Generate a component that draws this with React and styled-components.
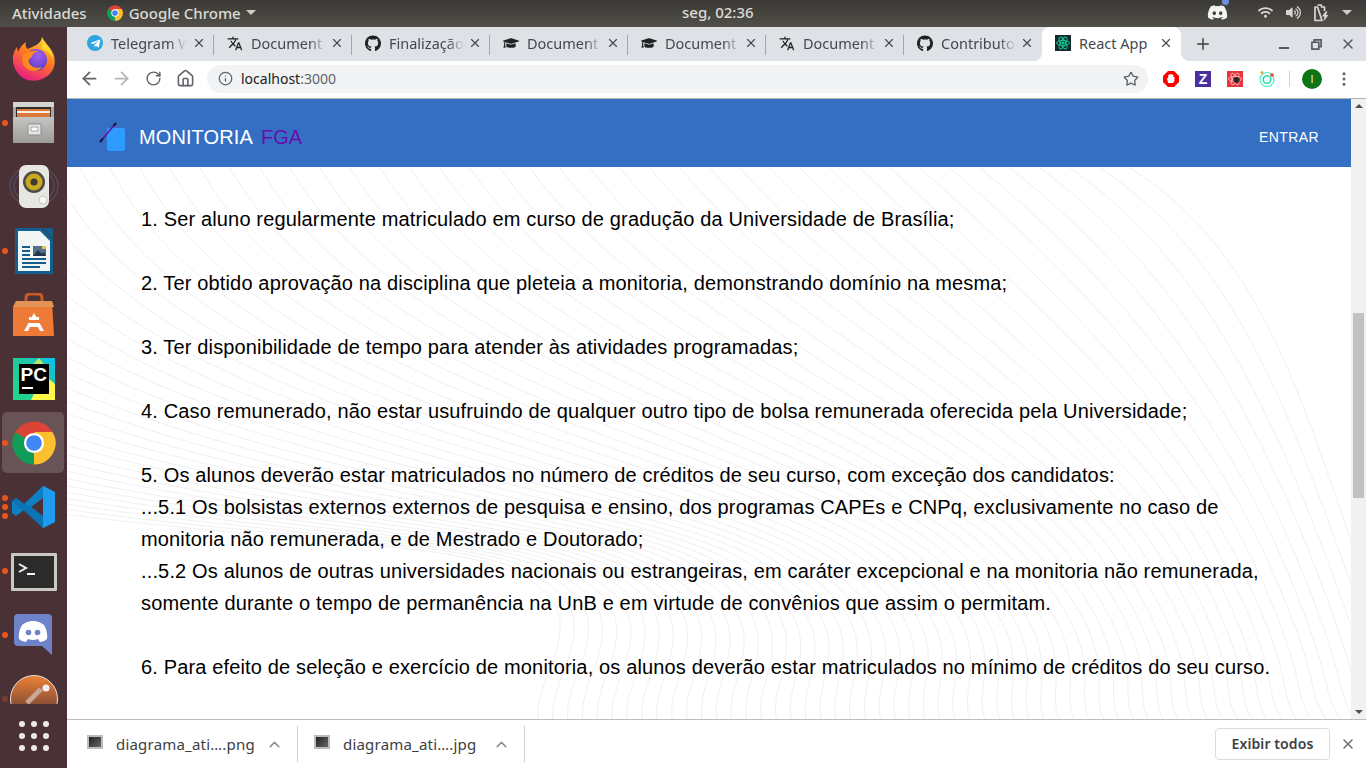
import React from 'react';
import styled, { createGlobalStyle } from 'styled-components';
import { ArrowLeft, ArrowRight, RotateCw, Home, Info, Star, Plus, X, ChevronUp, EllipsisVertical } from 'lucide-react';
import { FaDiscord, FaGithub, FaGraduationCap, FaTelegramPlane, FaVolumeUp, FaWifi } from 'react-icons/fa';
import { MdTranslate } from 'react-icons/md';

const GlobalStyle = createGlobalStyle`
  html, body, #root { margin: 0; height: 100%; }
  body { overflow: hidden; background: #fff; font-family: "Noto Sans", sans-serif; }
  * { box-sizing: border-box; }
`;

const Desktop = styled.div`
  width: 1366px;
  height: 768px;
  display: flex;
  flex-direction: column;
  overflow: hidden;
`;

const TopBar = styled.div`
  height: 27px;
  flex: none;
  display: flex;
  align-items: center;
  justify-content: space-between;
  padding: 0 14px 2px 12px;
  background: linear-gradient(#3a3935, #514f49);
  color: #dcdad5;
  font-size: 15px;
  font-weight: 500;
  position: relative;
`;

const BarGroup = styled.div`
  display: flex;
  align-items: center;
  gap: ${p => p.$gap || 0}px;
  margin-left: ${p => p.$left || 0}px;
`;

const AppName = styled.span`
  margin-left: 6px;
`;

const Caret = styled.span`
  display: inline-block;
  border-left: 5px solid transparent;
  border-right: 5px solid transparent;
  border-top: 5px solid #cfcdc8;
  margin-left: ${p => p.$left || 0}px;
`;

const Clock = styled.div`
  position: absolute;
  left: 682px;
  top: 2px;
`;

const DiscordTray = styled.span`
  position: relative;
  display: flex;
  margin-right: 30px;
  &::after {
    content: '';
    position: absolute;
    top: -4px;
    right: -1px;
    width: 7px;
    height: 7px;
    border-radius: 50%;
    background: #6f8fd8;
  }
`;

const Workspace = styled.div`
  flex: 1;
  min-height: 0;
  display: flex;
`;

const Dock = styled.div`
  width: 67px;
  flex: none;
  display: flex;
  flex-direction: column;
  background: #4a3136;
`;

const DockList = styled.div`
  height: 677px;
  overflow: hidden;
  flex: none;
`;

const DockSlot = styled.div`
  position: relative;
  height: 64px;
  display: flex;
  align-items: center;
  justify-content: center;
  &::before {
    content: '';
    position: absolute;
    inset: 1px 3px 2px 2px;
    border-radius: 5px;
    background: ${p => (p.$active ? 'rgba(255,255,255,0.17)' : 'transparent')};
  }
  & > svg { position: relative; }
`;

const DotColumn = styled.div`
  position: absolute;
  left: 2px;
  top: 0;
  bottom: 0;
  display: flex;
  flex-direction: column;
  justify-content: center;
  gap: 3px;
  z-index: 1;
`;

const Dot = styled.span`
  width: 6px;
  height: 6px;
  border-radius: 50%;
  background: ${p => (p.$dim ? '#7a3a2c' : '#e9541f')};
`;

const AppGrid = styled.div`
  height: 64px;
  padding: 16px 17px;
  display: grid;
  grid-template-columns: repeat(3, 6px);
  grid-auto-rows: 6px;
  gap: 6px;
  justify-content: center;
  align-content: center;
  & > span { border-radius: 50%; background: #ece9e9; }
`;

const Browser = styled.div`
  flex: 1;
  min-width: 0;
  display: flex;
  flex-direction: column;
`;

const TabStrip = styled.div`
  height: 34px;
  flex: none;
  display: flex;
  align-items: flex-end;
  padding-left: 9px;
  background: #dee1e6;
  position: relative;
`;

const Tab = styled.div`
  width: 138px;
  height: 34px;
  display: flex;
  align-items: center;
  padding: 0 0 2px ${p => (p.$first ? 11 : 13)}px;
  color: #45484d;
  font-size: 14.5px;
  position: relative;
  &::after {
    content: '';
    position: absolute;
    right: 0;
    top: 8px;
    height: 20px;
    width: 1px;
    background: ${p => (p.$noSep ? 'transparent' : '#a4a7ab')};
  }
`;

const ActiveTab = styled(Tab)`
  width: 139px;
  background: #fff;
  border-radius: 8px 8px 0 0;
  &::before, &::after {
    content: '';
    position: absolute;
    top: auto;
    bottom: 0;
    width: 8px;
    height: 8px;
  }
  &::before {
    left: -8px;
    background: radial-gradient(circle at 0 0, transparent 7.5px, #fff 8px);
  }
  &::after {
    right: -8px;
    background: radial-gradient(circle at 100% 0, transparent 7.5px, #fff 8px);
  }
`;

const Favicon = styled.span`
  width: 16px;
  height: 16px;
  flex: none;
  display: flex;
  align-items: center;
  justify-content: center;
  color: #202124;
`;

const TelegramBadge = styled(Favicon)`
  border-radius: 50%;
  background: #2ca5e0;
  color: #fff;
`;

const TabTitle = styled.span`
  width: 75px;
  margin-left: 8px;
  white-space: nowrap;
  mask-image: linear-gradient(to right, #000 78%, transparent 100%);
`;

const ActiveTitle = styled.span`
  margin-left: 8px;
  white-space: nowrap;
`;

const TabClose = styled.span`
  position: absolute;
  right: 8px;
  top: 9px;
  display: flex;
  color: #45484d;
`;

const NewTab = styled.span`
  width: 44px;
  height: 34px;
  display: flex;
  align-items: center;
  justify-content: center;
  color: #3c4043;
`;

const WindowButtons = styled.div`
  margin-left: auto;
  height: 34px;
  padding-right: 2px;
  display: flex;
  align-items: center;
  color: #55585c;
`;

const WindowButton = styled.span`
  width: 32px;
  height: 34px;
  display: flex;
  align-items: center;
  justify-content: center;
`;

const MinimizeGlyph = styled.span`
  width: 10px;
  height: 2px;
  background: #55585c;
  margin-top: 8px;
`;

const Toolbar = styled.div`
  height: 38px;
  flex: none;
  display: flex;
  align-items: center;
  background: #fff;
  border-bottom: 1px solid #b3b3b3;
  padding-bottom: 2px;
  padding-left: 6px;
`;

const NavButton = styled.span`
  width: 32px;
  height: 28px;
  flex: none;
  display: flex;
  align-items: center;
  justify-content: center;
  color: ${p => (p.$off ? '#b4b7ba' : '#5f6368')};
`;

const Omnibox = styled.div`
  width: 941px;
  height: 28px;
  margin-left: 6px;
  flex: none;
  display: flex;
  align-items: center;
  padding: 0 9px 0 11px;
  border-radius: 14px;
  background: #f1f3f4;
  color: #5f6368;
  font-size: 14px;
`;

const Address = styled.span`
  margin-left: 8px;
  flex: 1;
  color: #5f6368;
  & > b { color: #202124; font-weight: 400; }
`;

const Extensions = styled.div`
  display: flex;
  align-items: center;
  gap: 16px;
  margin-left: 15px;
`;

const ToolDivider = styled.span`
  width: 1px;
  height: 16px;
  background: #d0d2d5;
  margin-left: -2px;
`;

const Avatar = styled.span`
  width: 20px;
  height: 20px;
  margin-left: -4px;
  border-radius: 50%;
  background: #0f7417;
  color: #dfeedd;
  font-family: "Liberation Sans", sans-serif;
  font-size: 11px;
  display: flex;
  align-items: center;
  justify-content: center;
`;

const MenuDots = styled.span`
  display: flex;
  margin-left: -3px;
  color: #5f6368;
`;

const Viewport = styled.div`
  flex: 1;
  min-height: 0;
  display: flex;
`;

const Page = styled.main`
  flex: 1;
  min-width: 0;
  position: relative;
  overflow: hidden;
  font-family: "Liberation Sans", Arial, sans-serif;
  background: #fff;
`;

const Waves = styled.svg`
  position: absolute;
  inset: 0;
`;

const AppHeader = styled.header`
  height: 68px;
  display: flex;
  align-items: center;
  justify-content: space-between;
  padding: 8px 32px 0;
  background: #356fc4;
  position: relative;
  color: #fff;
`;

const Brand = styled.div`
  display: flex;
  align-items: center;
  font-size: 20px;
  letter-spacing: 0.1px;
`;

const BrandAccent = styled.span`
  color: #6a0dad;
  margin-left: 8px;
`;

const LoginButton = styled.span`
  font-size: 14px;
  letter-spacing: 0.4px;
`;

const Rules = styled.section`
  position: relative;
  padding: 36px 74px 0;
  color: #000;
  font-size: 20px;
  letter-spacing: 0.15px;
  line-height: 32px;
`;

const Rule = styled.p`
  margin: 0 0 32px;
`;

const Scrollbar = styled.div`
  width: 15px;
  flex: none;
  display: flex;
  flex-direction: column;
  align-items: center;
  padding: 0 2px;
  background: #f1f1f1;
  position: relative;
`;

const ScrollArrow = styled.span`
  position: absolute;
  ${p => (p.$down ? 'bottom: 5px;' : 'top: 5px;')}
  border-left: 4px solid transparent;
  border-right: 4px solid transparent;
  ${p => (p.$down ? 'border-top: 4px solid #505050;' : 'border-bottom: 4px solid #505050;')}
`;

const ScrollThumb = styled.span`
  width: 11px;
  height: 185px;
  margin-top: 214px;
  background: #c1c1c1;
`;

const DownloadBar = styled.footer`
  height: 49px;
  flex: none;
  display: flex;
  align-items: center;
  background: #fff;
  border-top: 1px solid #bdbdbd;
`;

const DownloadItem = styled.div`
  width: ${p => p.$width}px;
  height: 36px;
  display: flex;
  align-items: center;
  padding-left: ${p => p.$pad}px;
  border-right: 1px solid #cfcfcf;
  color: #3c4043;
  font-size: 15px;
  letter-spacing: 0.2px;
  position: relative;
`;

const FileThumb = styled.span`
  width: 16px;
  height: 14px;
  flex: none;
  margin-top: -4px;
  border: 2px solid #bcbcbc;
  background: linear-gradient(135deg, #222, #666);
`;

const FileName = styled.span`
  margin-left: 13px;
  width: 150px;
`;

const FileChevron = styled.span`
  display: flex;
  color: #8a8c8f;
`;

const ShowAll = styled.span`
  margin-left: auto;
  width: 115px;
  height: 32px;
  margin-top: -1px;
  display: flex;
  align-items: center;
  justify-content: center;
  border: 1px solid #dadce0;
  border-radius: 4px;
  color: #3c4043;
  font-size: 14px;
  font-weight: 600;
  letter-spacing: 0.1px;
`;

const BarClose = styled.span`
  width: 36px;
  display: flex;
  justify-content: center;
  color: #6b6e72;
`;

// Faint concentric lines behind the page text
const wavePaths = Array.from({ length: 60 }, (_, i) => {
  const x0 = 1063 - 30 * i;
  const midX = 1290 - 15 * i;
  return `M${x0} 69 C${x0 + 130} ${150 + 5 * i} ${1235 - 17 * i} ${300 + 2 * i} ${midX} 460 S${midX + 30} 590 ${midX + 75} 640`;
});

const FirefoxIcon = () => (
  <svg width="46" height="46" viewBox="0 0 46 46">
    <defs>
      <linearGradient id="ffBase" x1="0.8" y1="0" x2="0.3" y2="1">
        <stop offset="0" stopColor="#ffdd3c" />
        <stop offset="0.45" stopColor="#ff7a1f" />
        <stop offset="1" stopColor="#e8188a" />
      </linearGradient>
      <radialGradient id="ffGlobe" cx="0.6" cy="0.3" r="0.8">
        <stop offset="0" stopColor="#a45cf0" />
        <stop offset="1" stopColor="#4a3bbd" />
      </radialGradient>
    </defs>
    <path d="M31 1 C33 7 39 10 42 17 C46 26 43 36 35 41 C26 47 12 46 6 36 C0 27 1 17 6 11 L7 16 C9 11 12 8 15 6 C14 10 15 12 17 13 C22 10 30 9 31 1Z" fill="url(#ffBase)" />
    <circle cx="25" cy="24" r="11" fill="url(#ffGlobe)" />
    <path d="M12 19 C16 15 23 14 28 15 C24 16 21 18 21 21 C18 22 17 24 18 27 C20 31 26 33 31 31 C26 38 15 35 12 28 C11 25 11 22 12 19Z" fill="#ff8a1e" />
    <path d="M31 1 C34 8 41 12 42 22 C39 17 35 14 30 13 C32 9 32 5 31 1Z" fill="#ffd52e" />
  </svg>
);

const CabinetIcon = () => (
  <svg width="42" height="44" viewBox="0 0 42 44">
    <defs>
      <linearGradient id="cabFront" x1="0" y1="0" x2="0" y2="1">
        <stop offset="0" stopColor="#c4c4c2" />
        <stop offset="1" stopColor="#9c9c9a" />
      </linearGradient>
    </defs>
    <rect x="0" y="1" width="41" height="41" rx="2" fill="#a9a9a7" />
    <rect x="0" y="1" width="41" height="5" fill="#d4d4d2" />
    <rect x="3" y="6" width="35" height="10" fill="#2d2d2d" />
    <rect x="4" y="8" width="33" height="8" fill="#d9793a" />
    <rect x="4" y="10" width="33" height="2" fill="#f6eee5" />
    <rect x="0" y="16" width="41" height="26" fill="url(#cabFront)" />
    <rect x="15" y="23" width="13" height="11" rx="1" fill="#e6e6e4" stroke="#8a8a88" />
    <rect x="18" y="26" width="7" height="4" fill="#fafafa" stroke="#777" strokeWidth="0.6" />
  </svg>
);

const SpeakerIcon = () => (
  <svg width="50" height="46" viewBox="0 0 50 46">
    <ellipse cx="25" cy="22" rx="24" ry="20" fill="none" stroke="#5d5f77" strokeWidth="1.5" opacity="0.5" />
    <ellipse cx="25" cy="22" rx="20" ry="17" fill="none" stroke="#5d5f77" strokeWidth="1.5" opacity="0.5" />
    <rect x="10" y="1" width="30" height="43" rx="7" fill="#e6e6e2" />
    <circle cx="25" cy="18" r="11" fill="#4c4c46" />
    <circle cx="25" cy="18" r="8.5" fill="#c8a91f" />
    <circle cx="25" cy="18" r="3.5" fill="#3a3a30" />
    <circle cx="34" cy="36" r="4" fill="#f6f6f4" stroke="#c4c4c0" />
  </svg>
);

const WriterIcon = () => (
  <svg width="40" height="46" viewBox="0 0 40 46">
    <path d="M1 0 H28 L39 11 V46 H1Z" fill="#125f8d" />
    <path d="M4 3 H26 L36 13 V43 H4Z" fill="#f4f5f5" />
    <path d="M29 0 H39 V10Z" fill="#125f8d" />
    <path d="M8 19 H16 M8 23 H16 M8 27 H16 M8 31 H32 M8 35 H32 M8 39 H26" stroke="#125f8d" strokeWidth="2" />
    <rect x="19" y="18" width="13" height="10" fill="#54708a" />
    <path d="M19 28 L24 22 L28 26 L30 24 L32 28Z" fill="#22364a" />
    <rect x="28" y="18" width="4" height="3" fill="#e5c64a" />
  </svg>
);

const StoreIcon = () => (
  <svg width="42" height="44" viewBox="0 0 42 44">
    <path d="M13 10 V5 Q13 1 17 1 H25 Q29 1 29 5 V10" fill="none" stroke="#c95a25" strokeWidth="3" />
    <path d="M3 8 H39 L41 43 H0 L0 15Z" fill="#ee7a38" />
    <path d="M3 8 H39 L41 14 H0Z" fill="#e39355" />
    <path d="M21 20 L31 38 H27 L25 34 H17 L15 38 H11Z" fill="#fff" />
    <rect x="13" y="27" width="16" height="3" fill="#ee7a38" />
    <rect x="16" y="24" width="10" height="3" fill="#fff" />
  </svg>
);

const PyCharmIcon = () => (
  <svg width="42" height="42" viewBox="0 0 42 42">
    <defs>
      <linearGradient id="pcBg" x1="0" y1="1" x2="1" y2="0">
        <stop offset="0" stopColor="#21d789" />
        <stop offset="0.6" stopColor="#21c7a5" />
        <stop offset="1" stopColor="#07c3f2" />
      </linearGradient>
    </defs>
    <rect width="42" height="42" fill="url(#pcBg)" />
    <path d="M42 42 H18 L30 16 L42 26Z" fill="#fcf84a" />
    <path d="M26 0 L34 10 L30 16 L20 6Z" fill="#b7e66b" />
    <rect x="6" y="6" width="30" height="30" fill="#000" />
    <text x="7.5" y="23" fontFamily="Liberation Sans, sans-serif" fontWeight="700" fontSize="19" fill="#fff">PC</text>
    <rect x="9" y="29" width="11" height="2" fill="#fff" />
  </svg>
);

const ChromeIcon = ({ size = 44 }) => (
  <svg width={size} height={size} viewBox="0 0 48 48">
    <circle cx="24" cy="24" r="23.5" fill="#db4437" />
    <path d="M24 24 L44.4 12.2 A23.5 23.5 0 0 1 24 47.5Z" fill="#fbc02d" />
    <path d="M24 24 L24 47.5 A23.5 23.5 0 0 1 3.6 12.2Z" fill="#0f9d58" />
    <path d="M24 12 H44.4 L35 24Z" fill="#fbc02d" />
    <path d="M24 36 L35 24 L24 47.5Z" fill="#fbc02d" />
    <path d="M13.6 30 L24 36 L14 44 L3.6 24Z" fill="#0f9d58" />
    <circle cx="24" cy="24" r="11" fill="#fff" />
    <circle cx="24" cy="24" r="8.5" fill="#4285f4" />
  </svg>
);

const VSCodeIcon = () => (
  <svg width="44" height="44" viewBox="0 0 44 44">
    <path d="M31 1 L43 7 V37 L31 43 L12 25 L4 31 L0 28 V16 L4 13 L12 19Z M31 13 L19 22 L31 31Z" fill="#0f7fc5" fillRule="evenodd" />
    <path d="M31 1 L43 7 V37 L31 43Z" fill="#1f9cf0" />
    <path d="M0 16 L4 13 L31 31 V43Z" fill="#0a6aa8" opacity="0.6" />
  </svg>
);

const TerminalIcon = () => (
  <svg width="46" height="38" viewBox="0 0 46 38" style={{ marginTop: 2 }}>
    <rect width="46" height="38" rx="1" fill="#c9c9c6" />
    <rect x="3" y="3" width="40" height="32" fill="#2b2b2b" />
    <path d="M8 11 L15 15 L8 19" fill="none" stroke="#f2f2f2" strokeWidth="2" />
    <rect x="16" y="20" width="8" height="2" fill="#f2f2f2" />
  </svg>
);

const DiscordDockIcon = () => (
  <svg width="40" height="42" viewBox="0 0 40 42">
    <path d="M4 0 H34 Q38 0 38 4 V41 L28 32 H4 Q0 32 0 28 V4 Q0 0 4 0Z" fill="#6f83c8" />
    <path d="M8 11 Q13 7 19 7 Q25 7 30 11 Q34 18 33 25 Q30 28 26 28 L24 25 Q19 27 14 25 L12 28 Q8 28 5 25 Q4 18 8 11Z" fill="#fff" />
    <circle cx="14.5" cy="18.5" r="2.8" fill="#6f83c8" />
    <circle cx="23.5" cy="18.5" r="2.8" fill="#6f83c8" />
  </svg>
);

const PostmanIcon = () => (
  <svg width="48" height="48" viewBox="0 0 48 48">
    <defs>
      <linearGradient id="pmFade" x1="0" y1="0" x2="0" y2="1">
        <stop offset="0" stopColor="#ee8135" />
        <stop offset="0.6" stopColor="#8f5236" />
      </linearGradient>
    </defs>
    <circle cx="24" cy="24" r="23.5" fill="url(#pmFade)" stroke="#e6e0dc" strokeWidth="1" />
    <path d="M17 28 L31 14" stroke="#c9a593" strokeWidth="5" />
    <circle cx="36" cy="13" r="3.5" fill="#eee" />
  </svg>
);

const AppLogo = () => (
  <svg width="32" height="36" viewBox="0 0 32 36" style={{ marginRight: 8 }}>
    <rect x="8" y="9" width="18" height="23" rx="2" fill="#2e9bff" />
    <path d="M1 23 L17 4" stroke="#6a0dad" strokeWidth="1.6" />
    <path d="M1 23 L4 19.5 M14.5 7 L17 4" stroke="#111" strokeWidth="1.8" />
  </svg>
);

const ReactFavicon = () => (
  <svg width="16" height="16" viewBox="0 0 16 16">
    <rect width="16" height="16" fill="#14292b" />
    <g fill="none" stroke="#17c493" strokeWidth="1">
      <ellipse cx="8" cy="8" rx="6.5" ry="2.6" />
      <ellipse cx="8" cy="8" rx="6.5" ry="2.6" transform="rotate(60 8 8)" />
      <ellipse cx="8" cy="8" rx="6.5" ry="2.6" transform="rotate(120 8 8)" />
    </g>
    <circle cx="8" cy="8" r="1.6" fill="#17c493" />
  </svg>
);

const BatteryIcon = () => (
  <svg width="15" height="18" viewBox="0 0 15 18">
    <path d="M3.5 1 H7.5 V3 H10.5 V7 M8 16.5 H1 V3 H3.5Z" fill="none" stroke="#d8d6d1" strokeWidth="1.7" strokeLinejoin="round" />
    <path d="M11.5 7.5 L8 12.5 H10.5 L9.5 17.5 L14.5 11 H12 L13.5 7.5Z" fill="#d8d6d1" />
  </svg>
);

const RestoreIcon = () => (
  <svg width="11" height="11" viewBox="0 0 12 12">
    <path d="M3.5 3.5 V1 H11 V8.5 H8.5 M1 3.5 H8.5 V11 H1Z" fill="none" stroke="#55585c" strokeWidth="1.8" />
  </svg>
);

const AdBlockIcon = () => (
  <svg width="16" height="16" viewBox="0 0 16 16">
    <path d="M5 0 H11 L16 5 V11 L11 16 H5 L0 11 V5Z" fill="#f00" />
    <path d="M5 12 L4 7 L5.2 7 V4 H6.2 V3 H7.2 V3.6 H8.4 V3 H9.4 V4 H10.4 V6 L11.4 6 V10 L10 12Z" fill="#fff" />
  </svg>
);

const ZoteroIcon = () => (
  <svg width="16" height="16" viewBox="0 0 16 16">
    <rect width="16" height="16" fill="#4a2fa0" />
    <text x="8" y="13.2" textAnchor="middle" fontFamily="Liberation Sans, sans-serif" fontWeight="700" fontSize="14" fill="#fff">Z</text>
  </svg>
);

const ReactDevIcon = () => (
  <svg width="16" height="16" viewBox="0 0 16 16">
    <rect width="16" height="16" fill="#e8343c" />
    <g fill="none" stroke="#f6c9c9" strokeWidth="0.8">
      <ellipse cx="8" cy="8" rx="6.5" ry="2.6" />
      <ellipse cx="8" cy="8" rx="6.5" ry="2.6" transform="rotate(60 8 8)" />
      <ellipse cx="8" cy="8" rx="6.5" ry="2.6" transform="rotate(120 8 8)" />
    </g>
    <circle cx="9.5" cy="9" r="3" fill="#3a2020" />
  </svg>
);

const RingIcon = () => (
  <svg width="16" height="16" viewBox="0 0 16 16">
    <circle cx="8" cy="8.5" r="7" fill="none" stroke="#46f0c4" strokeWidth="1.2" />
    <circle cx="8" cy="8.5" r="3.8" fill="none" stroke="#2ed8a8" strokeWidth="1.6" />
    <circle cx="13" cy="4" r="1.8" fill="#f04030" />
    <circle cx="3" cy="1.6" r="1.4" fill="#f59a23" />
  </svg>
);

const TelegramFavicon = () => (
  <TelegramBadge><FaTelegramPlane size={11} /></TelegramBadge>
);

const TranslateFavicon = () => <Favicon><MdTranslate size={17} /></Favicon>;
const GithubFavicon = () => <Favicon><FaGithub size={17} /></Favicon>;
const CapFavicon = () => <Favicon><FaGraduationCap size={16} /></Favicon>;

const tabs = [
  { title: 'Telegram W', icon: <TelegramFavicon /> },
  { title: 'Document', icon: <TranslateFavicon /> },
  { title: 'Finalização', icon: <GithubFavicon /> },
  { title: 'Document', icon: <CapFavicon /> },
  { title: 'Document', icon: <CapFavicon /> },
  { title: 'Document', icon: <TranslateFavicon /> },
  { title: 'Contributo', icon: <GithubFavicon /> },
];

const dockApps = [
  { icon: <FirefoxIcon />, dots: 0 },
  { icon: <CabinetIcon />, dots: 1 },
  { icon: <SpeakerIcon />, dots: 0 },
  { icon: <WriterIcon />, dots: 1 },
  { icon: <StoreIcon />, dots: 0 },
  { icon: <PyCharmIcon />, dots: 0 },
  { icon: <ChromeIcon />, dots: 1, active: true },
  { icon: <VSCodeIcon />, dots: 3 },
  { icon: <TerminalIcon />, dots: 1 },
  { icon: <DiscordDockIcon />, dots: 1 },
  { icon: <PostmanIcon />, dots: 1, dim: true },
];

const rules = [
  ['1. Ser aluno regularmente matriculado em curso de gradução da Universidade de Brasília;'],
  ['2. Ter obtido aprovação na disciplina que pleteia a monitoria, demonstrando domínio na mesma;'],
  ['3. Ter disponibilidade de tempo para atender às atividades programadas;'],
  ['4. Caso remunerado, não estar usufruindo de qualquer outro tipo de bolsa remunerada oferecida pela Universidade;'],
  [
    '5. Os alunos deverão estar matriculados no número de créditos de seu curso, com exceção dos candidatos:',
    '...5.1 Os bolsistas externos externos de pesquisa e ensino, dos programas CAPEs e CNPq, exclusivamente no caso de monitoria não remunerada, e de Mestrado e Doutorado;',
    '...5.2 Os alunos de outras universidades nacionais ou estrangeiras, em caráter excepcional e na monitoria não remunerada, somente durante o tempo de permanência na UnB e em virtude de convênios que assim o permitam.',
  ],
  ['6. Para efeito de seleção e exercício de monitoria, os alunos deverão estar matriculados no mínimo de créditos do seu curso.'],
];

export default function App() {
  return (
    <Desktop>
      <GlobalStyle />
      <TopBar>
        <BarGroup>
          <span>Atividades</span>
          <BarGroup $left={20}>
            <ChromeIcon size={16} />
            <AppName>Google Chrome</AppName>
            <Caret $left={5} />
          </BarGroup>
        </BarGroup>
        <Clock>seg, 02:36</Clock>
        <BarGroup>
          <DiscordTray><FaDiscord size={21} color="#f4f4f2" /></DiscordTray>
          <BarGroup $gap={13}>
            <FaWifi size={15} color="#d8d6d1" />
            <FaVolumeUp size={15} color="#d8d6d1" />
            <BatteryIcon />
            <Caret />
          </BarGroup>
        </BarGroup>
      </TopBar>

      <Workspace>
        <Dock>
          <DockList>
            {dockApps.map((app, i) => (
              <DockSlot key={i} $active={app.active}>
                {app.dots > 0 && (
                  <DotColumn>
                    {Array.from({ length: app.dots }, (_, d) => <Dot key={d} $dim={app.dim} />)}
                  </DotColumn>
                )}
                {app.icon}
              </DockSlot>
            ))}
          </DockList>
          <AppGrid>
            {Array.from({ length: 9 }, (_, i) => <span key={i} />)}
          </AppGrid>
        </Dock>

        <Browser>
          <TabStrip>
            {tabs.map((tab, i) => (
              <Tab key={i} $first={i === 0} $noSep={i === tabs.length - 1}>
                {tab.icon}
                <TabTitle>{tab.title}</TabTitle>
                <TabClose><X size={14} strokeWidth={2} /></TabClose>
              </Tab>
            ))}
            <ActiveTab>
              <Favicon><ReactFavicon /></Favicon>
              <ActiveTitle>React App</ActiveTitle>
              <TabClose><X size={14} strokeWidth={2} /></TabClose>
            </ActiveTab>
            <NewTab><Plus size={18} strokeWidth={2} /></NewTab>
            <WindowButtons>
              <WindowButton><MinimizeGlyph /></WindowButton>
              <WindowButton><RestoreIcon /></WindowButton>
              <WindowButton><X size={16} strokeWidth={2.2} /></WindowButton>
            </WindowButtons>
          </TabStrip>

          <Toolbar>
            <NavButton><ArrowLeft size={21} strokeWidth={2} /></NavButton>
            <NavButton $off><ArrowRight size={21} strokeWidth={2} /></NavButton>
            <NavButton><RotateCw size={17} strokeWidth={2} /></NavButton>
            <NavButton><Home size={19} strokeWidth={2} /></NavButton>
            <Omnibox>
              <Info size={15} strokeWidth={2} />
              <Address><b>localhost</b>:3000</Address>
              <Star size={16} strokeWidth={2} />
            </Omnibox>
            <Extensions>
              <AdBlockIcon />
              <ZoteroIcon />
              <ReactDevIcon />
              <RingIcon />
              <ToolDivider />
              <Avatar>I</Avatar>
              <MenuDots><EllipsisVertical size={18} /></MenuDots>
            </Extensions>
          </Toolbar>

          <Viewport>
            <Page>
              <Waves width="1284" height="620" viewBox="0 0 1284 620">
                {wavePaths.map((d, i) => (
                  <path key={i} d={d} fill="none" stroke="#f0f0f0" strokeWidth="1" />
                ))}
              </Waves>
              <AppHeader>
                <Brand>
                  <AppLogo />
                  MONITORIA
                  <BrandAccent>FGA</BrandAccent>
                </Brand>
                <LoginButton>ENTRAR</LoginButton>
              </AppHeader>
              <Rules>
                {rules.map((lines, i) => (
                  <Rule key={i}>
                    {lines.map((line, l) => <React.Fragment key={l}>{l > 0 && <br />}{line}</React.Fragment>)}
                  </Rule>
                ))}
              </Rules>
            </Page>
            <Scrollbar>
              <ScrollArrow />
              <ScrollThumb />
              <ScrollArrow $down />
            </Scrollbar>
          </Viewport>

          <DownloadBar>
            <DownloadItem $width={231} $pad={20}>
              <FileThumb />
              <FileName>diagrama_ati….png</FileName>
              <FileChevron><ChevronUp size={17} /></FileChevron>
            </DownloadItem>
            <DownloadItem $width={227} $pad={16}>
              <FileThumb />
              <FileName>diagrama_ati….jpg</FileName>
              <FileChevron><ChevronUp size={17} /></FileChevron>
            </DownloadItem>
            <ShowAll>Exibir todos</ShowAll>
            <BarClose><X size={16} strokeWidth={2.2} /></BarClose>
          </DownloadBar>
        </Browser>
      </Workspace>
    </Desktop>
  );
}
